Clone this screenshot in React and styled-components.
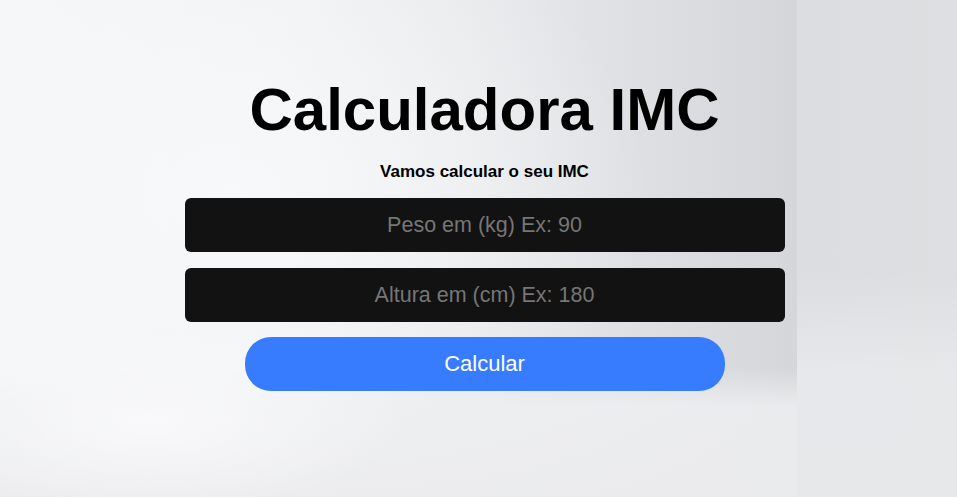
import React, { useState } from "react";
import styled, { createGlobalStyle } from "styled-components";

const GlobalStyle = createGlobalStyle`
  html, body {
    margin: 0;
    padding: 0;
    height: 100%;
  }
  body {
    font-family: "Liberation Sans", Arial, sans-serif;
    background-color: #e4e5e7;
    background-image:
      radial-gradient(ellipse 260px 90px at 150px 420px, rgba(250,250,252,0.9) 0%, rgba(250,250,252,0) 100%),
      linear-gradient(180deg, rgba(240,241,243,0) 0%, rgba(240,241,243,0) 74%, rgba(238,239,241,0.85) 82%, rgba(236,236,238,0.95) 100%),
      radial-gradient(ellipse 420px 300px at 230px 190px, rgba(248,249,251,0.9) 0%, rgba(248,249,251,0) 100%),
      linear-gradient(90deg, #f5f6f8 0%, #f1f2f4 35%, #e8e9eb 60%, #dcdde0 85%, #d5d6d9 100%),
      linear-gradient(180deg, rgba(232,233,235,0) 0%, rgba(232,233,235,0) 55%, rgba(232,233,235,0.9) 75%, #e7e8ea 100%),
      linear-gradient(90deg, #dcdde0 0%, #e0e1e3 50%, #e6e7e9 100%);
    background-size: 797px 100%, 797px 100%, 797px 100%, 797px 100%, 100% 100%, 100% 100%;
    background-position: 0 0, 0 0, 0 0, 0 0, 797px 0, 797px 0;
    background-repeat: no-repeat;
  }
  #root {
    min-height: 100%;
  }
`;

const Page = styled.main`
  min-height: 497px;
  display: flex;
  justify-content: center;
  padding-left: 12px;
  box-sizing: border-box;
`;

const Card = styled.section`
  width: 600px;
  padding-top: 75px;
  display: flex;
  flex-direction: column;
  align-items: center;
`;

const Title = styled.h1`
  margin: 0;
  font-size: 60px;
  font-weight: bold;
  line-height: 70px;
  color: #000;
`;

const Subtitle = styled.p`
  margin: 17px 0 16px;
  font-size: 17px;
  font-weight: bold;
  line-height: 20px;
  color: #000;
`;

const Field = styled.input`
  width: 100%;
  height: 54px;
  box-sizing: border-box;
  margin: 0 0 16px;
  border: none;
  border-radius: 6px;
  background: #121212;
  color: #ddd;
  font-family: "Liberation Sans", Arial, sans-serif;
  font-size: 21.5px;
  text-align: center;
  outline: none;
  -moz-appearance: textfield;

  &::-webkit-outer-spin-button,
  &::-webkit-inner-spin-button {
    -webkit-appearance: none;
    margin: 0;
  }

  &::placeholder {
    color: #767676;
  }
`;

const Button = styled.button`
  width: 480px;
  height: 54px;
  margin-top: -1px;
  border: none;
  border-radius: 26px;
  background: #377cff;
  color: #fff;
  font-family: "Liberation Sans", Arial, sans-serif;
  font-size: 22px;
  cursor: pointer;
`;

export default function App() {
  const [peso, setPeso] = useState("");
  const [altura, setAltura] = useState("");

  return (
    <>
      <GlobalStyle />
      <Page>
        <Card>
          <Title>Calculadora IMC</Title>
          <Subtitle>Vamos calcular o seu IMC</Subtitle>
          <Field
            type="number"
            placeholder="Peso em (kg) Ex: 90"
            value={peso}
            onChange={(e) => setPeso(e.target.value)}
          />
          <Field
            type="number"
            placeholder="Altura em (cm) Ex: 180"
            value={altura}
            onChange={(e) => setAltura(e.target.value)}
          />
          <Button>Calcular</Button>
        </Card>
      </Page>
    </>
  );
}
